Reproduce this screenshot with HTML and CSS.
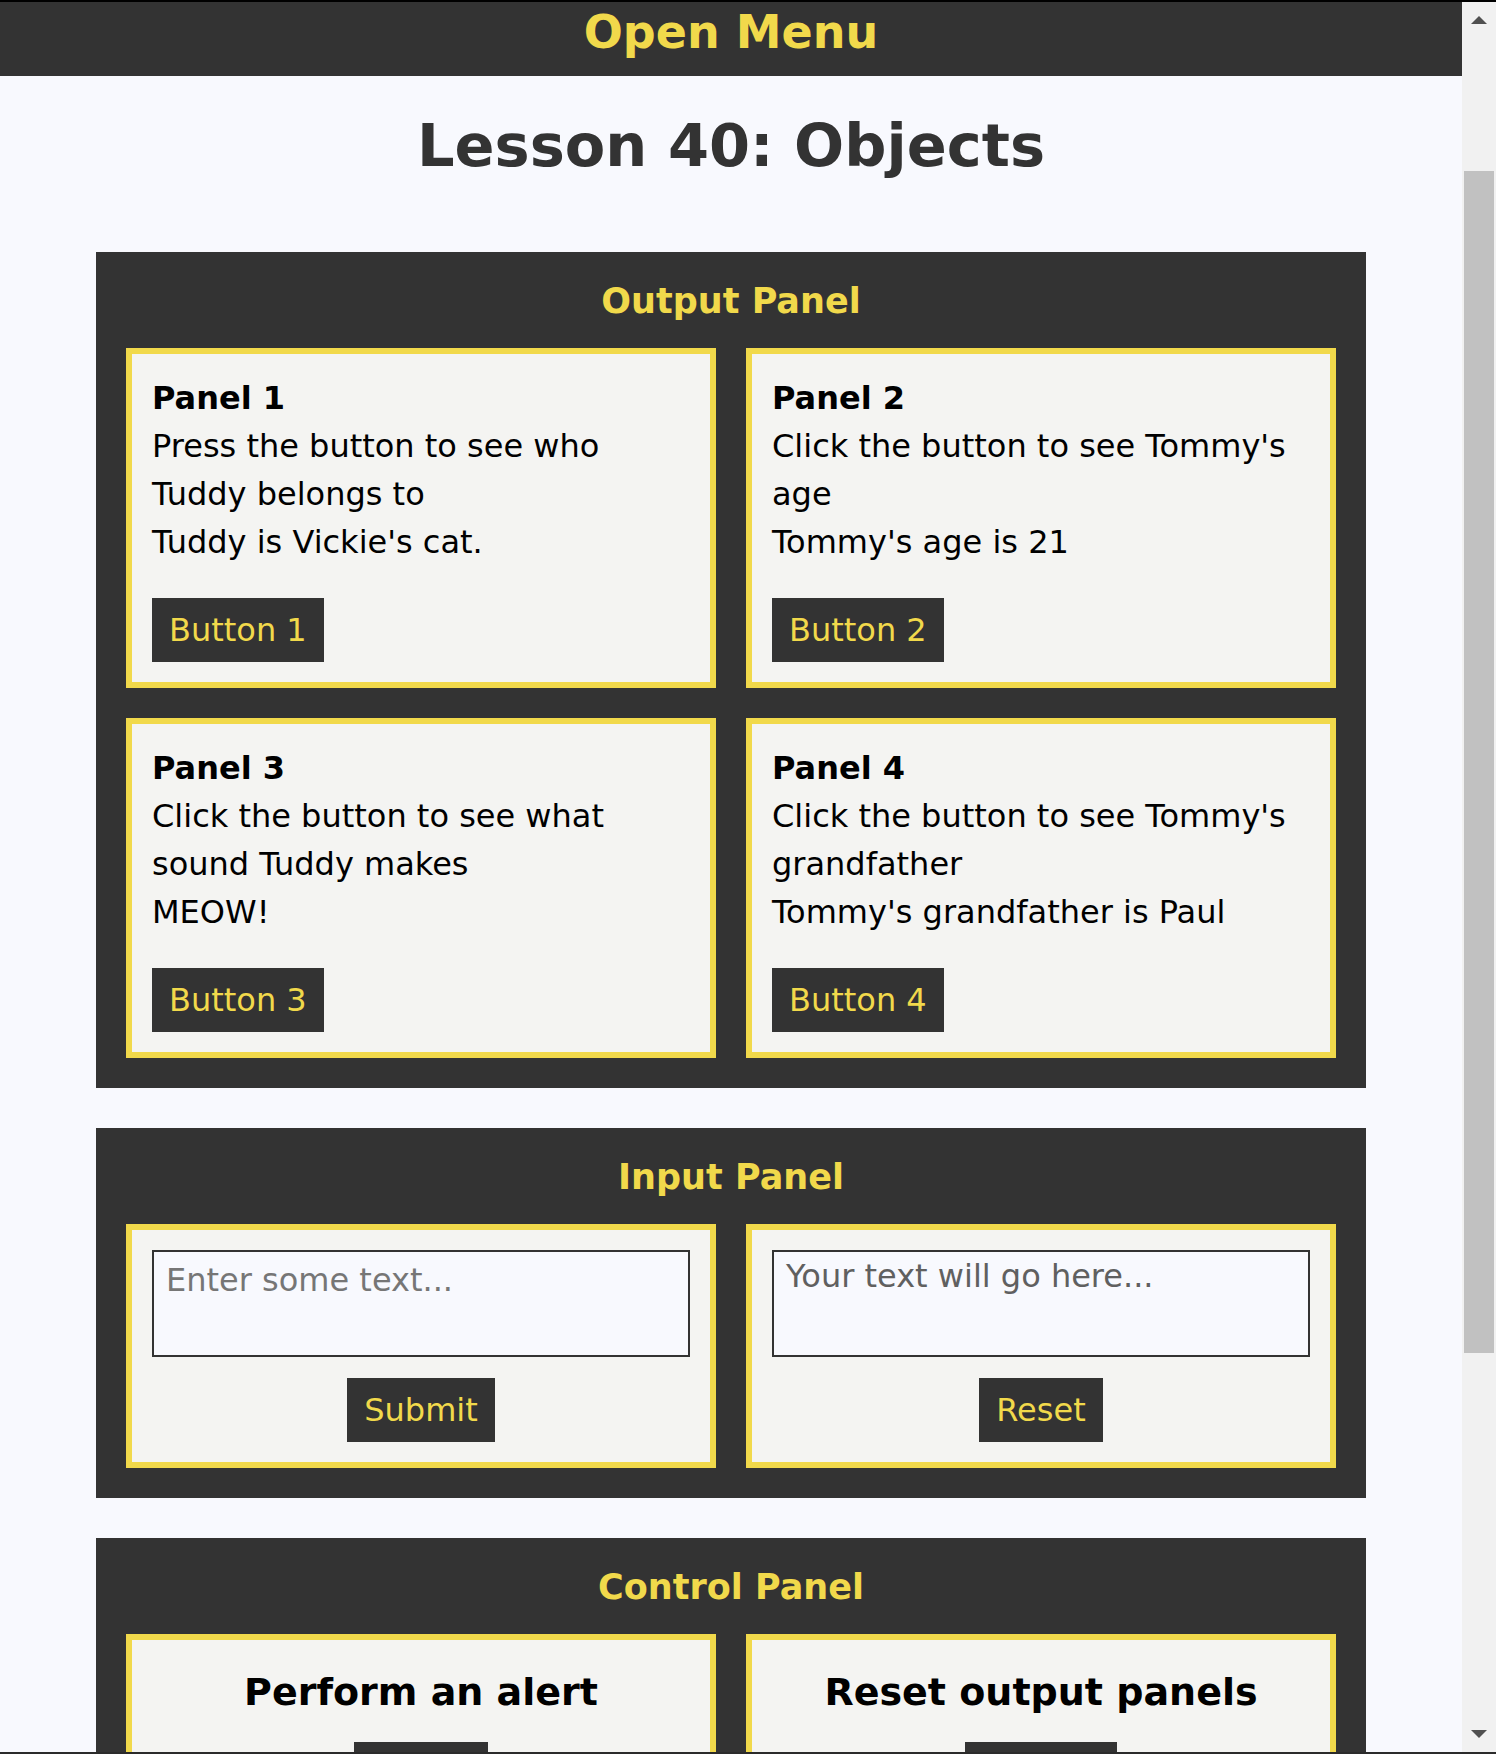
FILE: index.html
```html
<!DOCTYPE html>
<html lang="en">
<head>
<meta charset="utf-8">
<title>Lesson 40: Objects</title>
<link rel="stylesheet" href="styles.css">
</head>
<body>
<div class="page">
  <header class="menu-bar">Open Menu</header>
  <h1 class="lesson-title">Lesson 40: Objects</h1>

  <section class="box">
    <h3 class="box-title">Output Panel</h3>
    <div class="grid">
      <div class="card">
        <div class="card-name">Panel 1</div>
        <p class="card-text">Press the button to see who Tuddy belongs to</p>
        <p class="card-text">Tuddy is Vickie's cat.</p>
        <button class="btn btn-out">Button 1</button>
      </div>
      <div class="card">
        <div class="card-name">Panel 2</div>
        <p class="card-text">Click the button to see Tommy's age</p>
        <p class="card-text">Tommy's age is 21</p>
        <button class="btn btn-out">Button 2</button>
      </div>
      <div class="card">
        <div class="card-name">Panel 3</div>
        <p class="card-text">Click the button to see what sound Tuddy makes</p>
        <p class="card-text">MEOW!</p>
        <button class="btn btn-out">Button 3</button>
      </div>
      <div class="card">
        <div class="card-name">Panel 4</div>
        <p class="card-text">Click the button to see Tommy's grandfather</p>
        <p class="card-text">Tommy's grandfather is Paul</p>
        <button class="btn btn-out">Button 4</button>
      </div>
    </div>
  </section>

  <section class="box">
    <h3 class="box-title">Input Panel</h3>
    <div class="grid">
      <div class="card card-center">
        <textarea class="field field-in" placeholder="Enter some text..."></textarea>
        <button class="btn btn-in">Submit</button>
      </div>
      <div class="card card-center">
        <textarea class="field field-out" placeholder="Your text will go here..." readonly></textarea>
        <button class="btn btn-in">Reset</button>
      </div>
    </div>
  </section>

  <section class="box">
    <h3 class="box-title">Control Panel</h3>
    <div class="grid">
      <div class="card card-center">
        <h2 class="ctl-title">Perform an alert</h2>
        <button class="btn btn-ctl btn-ctl-a">Alert</button>
      </div>
      <div class="card card-center">
        <h2 class="ctl-title">Reset output panels</h2>
        <button class="btn btn-ctl btn-ctl-b">Reset</button>
      </div>
    </div>
  </section>
</div>

<div class="fake-scrollbar" aria-hidden="true">
  <div class="sb-arrow sb-up"></div>
  <div class="sb-thumb"></div>
  <div class="sb-arrow sb-down"></div>
</div>
<div class="bottom-edge" aria-hidden="true"></div>
</body>
</html>
```

FILE: styles.css
```css
html {
  overflow: hidden;
  background: #f8f9fe;
}

body {
  margin: 0;
  border-top: 2px solid #000;
  font-family: "DejaVu Sans", "Liberation Sans", sans-serif;
  color: #000;
  background: #f8f9fe;
}

.page {
  margin-right: 34px;
}

.menu-bar {
  background: #333333;
  color: #f1d94b;
  font-weight: bold;
  font-size: 46px;
  line-height: 60px;
  height: 60px;
  padding-bottom: 14px;
  text-align: center;
}

.lesson-title {
  margin: 34px 0 70px;
  font-size: 59px;
  line-height: 72px;
  font-weight: bold;
  color: #333333;
  text-align: center;
}

.box {
  background: #333333;
  margin: 0 96px 40px;
  padding: 30px;
}

.box-title {
  margin: 0 0 28px;
  color: #f1d94b;
  font-size: 35px;
  line-height: 38px;
  font-weight: bold;
  text-align: center;
}

.grid {
  display: grid;
  grid-template-columns: 1fr 1fr;
  gap: 30px;
}

.card {
  background: #f4f4f2;
  border: 6px solid #f1d94b;
  padding: 20px;
  font-size: 32px;
  line-height: 48px;
}

.card-name {
  font-weight: bold;
}

.card-text {
  margin: 0;
}

.btn {
  display: block;
  background: #333333;
  color: #f1d94b;
  border: 0;
  font-family: "DejaVu Sans", "Liberation Sans", sans-serif;
  font-size: 32px;
  line-height: 32px;
  padding: 16px 17px;
  cursor: pointer;
}

.btn-out {
  margin-top: 32px;
}

.card-center {
  display: flex;
  flex-direction: column;
  align-items: center;
}

.field {
  display: block;
  box-sizing: border-box;
  width: 100%;
  height: 107px;
  border: 2px solid #333333;
  background: #f8f9fe;
  font-family: "DejaVu Sans", "Liberation Sans", sans-serif;
  font-size: 32px;
  line-height: normal;
  resize: none;
  margin: 0;
}

.field-in {
  padding: 9px 12px;
}

.field-in::placeholder {
  color: #767676;
  opacity: 1;
}

.field-out {
  padding: 5px 12px;
}

.field-out::placeholder {
  color: #606060;
  opacity: 1;
}

.btn-in {
  margin-top: 21px;
}

.ctl-title {
  margin: 9px 0 27px;
  font-size: 38px;
  line-height: 46px;
  font-weight: bold;
  text-align: center;
}

.btn-ctl-a {
  width: 134px;
  padding-left: 0;
  padding-right: 0;
}

.btn-ctl-b {
  width: 152px;
  padding-left: 0;
  padding-right: 0;
}

.fake-scrollbar {
  position: fixed;
  top: 2px;
  right: 0;
  width: 34px;
  bottom: 2px;
  background: #f1f1f1;
}

.sb-arrow {
  position: absolute;
  left: 9px;
  width: 0;
  height: 0;
  border-left: 8px solid transparent;
  border-right: 8px solid transparent;
}

.sb-up {
  top: 14px;
  border-bottom: 8px solid #505050;
}

.sb-down {
  bottom: 14px;
  border-top: 8px solid #505050;
}

.sb-thumb {
  position: absolute;
  top: 169px;
  left: 2px;
  right: 2px;
  height: 1182px;
  background: #c1c1c1;
}

.bottom-edge {
  position: fixed;
  left: 0;
  right: 0;
  bottom: 0;
  height: 2px;
  background: #2b2b2b;
}
```
